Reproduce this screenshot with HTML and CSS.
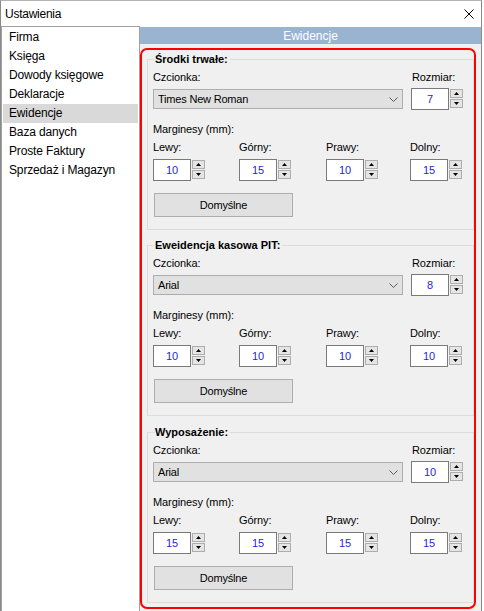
FILE: index.html
```html
<!DOCTYPE html>
<html lang="pl">
<head>
<meta charset="utf-8">
<title>Ustawienia</title>
<link rel="stylesheet" href="styles.css">
</head>
<body>
<div class="window">
  <div class="titlebar">
    <span class="title">Ustawienia</span>
    <svg class="close" width="10" height="10" viewBox="0 0 10 10"><path d="M0.5 0.5 L9.5 9.5 M9.5 0.5 L0.5 9.5" stroke="#000" stroke-width="1" fill="none"/></svg>
  </div>
  <div class="main">
    <ul class="nav">
      <li>Firma</li>
      <li>Księga</li>
      <li>Dowody księgowe</li>
      <li>Deklaracje</li>
      <li class="active">Ewidencje</li>
      <li>Baza danych</li>
      <li>Proste Faktury</li>
      <li>Sprzedaż i Magazyn</li>
    </ul>
    <div class="panel">
      <div class="panel-header">Ewidencje</div>
      <div class="highlight">

        <fieldset class="group">
          <legend>Środki trwałe:</legend>
          <div class="font-row">
            <div class="font-col">
              <div class="label">Czcionka:</div>
              <div class="ctrl"><div class="select"><span>Times New Roman</span><svg class="chev" width="9" height="5" viewBox="0 0 9 5"><path d="M0.5 0.5 L4.5 4.5 L8.5 0.5" stroke="#5a5a5a" stroke-width="1" fill="none"/></svg></div></div>
            </div>
            <div class="size-col">
              <div class="label">Rozmiar:</div>
              <div class="spin"><div class="spin-input">7</div><div class="spin-btns"><div class="spin-btn"><i class="up"></i></div><div class="spin-btn"><i class="down"></i></div></div></div>
            </div>
          </div>
          <div class="label margins-label">Marginesy (mm):</div>
          <div class="margins">
            <div class="m-cell"><div class="label">Lewy:</div><div class="spin"><div class="spin-input">10</div><div class="spin-btns"><div class="spin-btn"><i class="up"></i></div><div class="spin-btn"><i class="down"></i></div></div></div></div>
            <div class="m-cell"><div class="label">Górny:</div><div class="spin"><div class="spin-input">15</div><div class="spin-btns"><div class="spin-btn"><i class="up"></i></div><div class="spin-btn"><i class="down"></i></div></div></div></div>
            <div class="m-cell"><div class="label">Prawy:</div><div class="spin"><div class="spin-input">10</div><div class="spin-btns"><div class="spin-btn"><i class="up"></i></div><div class="spin-btn"><i class="down"></i></div></div></div></div>
            <div class="m-cell"><div class="label">Dolny:</div><div class="spin"><div class="spin-input">15</div><div class="spin-btns"><div class="spin-btn"><i class="up"></i></div><div class="spin-btn"><i class="down"></i></div></div></div></div>
          </div>
          <div class="btn">Domyślne</div>
        </fieldset>

        <fieldset class="group">
          <legend>Eweidencja kasowa PIT:</legend>
          <div class="font-row">
            <div class="font-col">
              <div class="label">Czcionka:</div>
              <div class="ctrl"><div class="select"><span>Arial</span><svg class="chev" width="9" height="5" viewBox="0 0 9 5"><path d="M0.5 0.5 L4.5 4.5 L8.5 0.5" stroke="#5a5a5a" stroke-width="1" fill="none"/></svg></div></div>
            </div>
            <div class="size-col">
              <div class="label">Rozmiar:</div>
              <div class="spin"><div class="spin-input">8</div><div class="spin-btns"><div class="spin-btn"><i class="up"></i></div><div class="spin-btn"><i class="down"></i></div></div></div>
            </div>
          </div>
          <div class="label margins-label">Marginesy (mm):</div>
          <div class="margins">
            <div class="m-cell"><div class="label">Lewy:</div><div class="spin"><div class="spin-input">10</div><div class="spin-btns"><div class="spin-btn"><i class="up"></i></div><div class="spin-btn"><i class="down"></i></div></div></div></div>
            <div class="m-cell"><div class="label">Górny:</div><div class="spin"><div class="spin-input">10</div><div class="spin-btns"><div class="spin-btn"><i class="up"></i></div><div class="spin-btn"><i class="down"></i></div></div></div></div>
            <div class="m-cell"><div class="label">Prawy:</div><div class="spin"><div class="spin-input">10</div><div class="spin-btns"><div class="spin-btn"><i class="up"></i></div><div class="spin-btn"><i class="down"></i></div></div></div></div>
            <div class="m-cell"><div class="label">Dolny:</div><div class="spin"><div class="spin-input">10</div><div class="spin-btns"><div class="spin-btn"><i class="up"></i></div><div class="spin-btn"><i class="down"></i></div></div></div></div>
          </div>
          <div class="btn">Domyślne</div>
        </fieldset>

        <fieldset class="group group-last">
          <legend>Wyposażenie:</legend>
          <div class="font-row">
            <div class="font-col">
              <div class="label">Czcionka:</div>
              <div class="ctrl"><div class="select"><span>Arial</span><svg class="chev" width="9" height="5" viewBox="0 0 9 5"><path d="M0.5 0.5 L4.5 4.5 L8.5 0.5" stroke="#5a5a5a" stroke-width="1" fill="none"/></svg></div></div>
            </div>
            <div class="size-col">
              <div class="label">Rozmiar:</div>
              <div class="spin"><div class="spin-input">10</div><div class="spin-btns"><div class="spin-btn"><i class="up"></i></div><div class="spin-btn"><i class="down"></i></div></div></div>
            </div>
          </div>
          <div class="label margins-label">Marginesy (mm):</div>
          <div class="margins">
            <div class="m-cell"><div class="label">Lewy:</div><div class="spin"><div class="spin-input">15</div><div class="spin-btns"><div class="spin-btn"><i class="up"></i></div><div class="spin-btn"><i class="down"></i></div></div></div></div>
            <div class="m-cell"><div class="label">Górny:</div><div class="spin"><div class="spin-input">15</div><div class="spin-btns"><div class="spin-btn"><i class="up"></i></div><div class="spin-btn"><i class="down"></i></div></div></div></div>
            <div class="m-cell"><div class="label">Prawy:</div><div class="spin"><div class="spin-input">15</div><div class="spin-btns"><div class="spin-btn"><i class="up"></i></div><div class="spin-btn"><i class="down"></i></div></div></div></div>
            <div class="m-cell"><div class="label">Dolny:</div><div class="spin"><div class="spin-input">15</div><div class="spin-btns"><div class="spin-btn"><i class="up"></i></div><div class="spin-btn"><i class="down"></i></div></div></div></div>
          </div>
          <div class="btn">Domyślne</div>
        </fieldset>

      </div>
    </div>
  </div>
</div>
</body>
</html>
```
FILE: styles.css
```css
* { box-sizing: border-box; }
html, body {
  margin: 0;
  padding: 0;
  background: #fff;
  overflow: hidden;
}
body {
  font-family: "Liberation Sans", Arial, sans-serif;
  font-size: 11px;
  color: #000;
}
.window {
  width: 482px;
  height: 640px;
  border: 1px solid #8a8a8a;
  border-top-color: #b4b4b4;
  background: #fff;
  display: flex;
  flex-direction: column;
}
.titlebar {
  height: 25px;
  flex: none;
  display: flex;
  align-items: center;
  justify-content: space-between;
  padding: 0 7px 0 4px;
  font-size: 12px;
  letter-spacing: -0.25px;
}
.close { display: block; }
.main {
  flex: 1;
  display: flex;
}
.nav {
  width: 139px;
  flex: none;
  margin: 0;
  padding: 1px;
  list-style: none;
  border: 1px solid #a0a0a0;
  background: #fff;
  font-size: 12px;
  letter-spacing: -0.15px;
}
.nav li {
  height: 19px;
  line-height: 19px;
  padding-left: 6px;
  white-space: nowrap;
}
.nav li.active { background: #d9d9d9; }
.panel {
  flex: 1;
  background: #f0f0f0;
  border-top: 1px solid #fff;
}
.panel-header {
  height: 17px;
  padding-top: 1px;
  line-height: 16px;
  background: #99b4d1;
  color: #fff;
  text-align: center;
  font-size: 12px;
}
.highlight {
  width: 336px;
  height: 561px;
  margin-top: 4px;
  border: 2px solid #ff0000;
  border-radius: 7px;
  padding: 2px 0 0 5px;
}
.group {
  width: 327px;
  margin: 0;
  padding: 0 0 12px 5px;
  border: 1px solid #dcdcdc;
  min-width: 0;
}
.group + .group { margin-top: 8px; }
.group-last { margin-top: 9px !important; }
.group legend {
  font-weight: bold;
  line-height: 14px;
  padding: 0 2px 0 1px;
  margin-left: 1px;
}
.label {
  line-height: 14px;
  white-space: nowrap;
  letter-spacing: -0.1px;
}
.font-row {
  display: flex;
  gap: 8px;
  padding-top: 4px;
}
.font-col { width: 250px; }
.font-col .label, .size-col .label { margin-bottom: 4px; }
.ctrl {
  height: 22px;
  display: flex;
  align-items: center;
}
.select {
  width: 250px;
  height: 20px;
  border: 1px solid #adadad;
  background: #e1e1e1;
  display: flex;
  align-items: center;
  justify-content: space-between;
  padding: 0 4px 0 4px;
  letter-spacing: -0.2px;
}
.chev { display: block; }
.size-col .label { padding-left: 1px; }
.spin { display: flex; }
.spin-input {
  width: 38px;
  height: 22px;
  border: 1px solid #7a7a7a;
  background: #fff;
  text-align: center;
  line-height: 20px;
  color: #1f1fd6;
}
.spin-btns {
  margin: 1px 0 0 1px;
  display: flex;
  flex-direction: column;
  gap: 1px;
}
.spin-btn {
  width: 13px;
  height: 9px;
  border: 1px solid #adadad;
  background: #e5e5e5;
  display: flex;
  align-items: center;
  justify-content: center;
}
.spin-btn i {
  display: block;
  width: 5px;
  height: 3px;
  background: #000;
}
.spin-btn i.up { clip-path: polygon(50% 0, 100% 100%, 0 100%); }
.spin-btn i.down { clip-path: polygon(0 0, 100% 0, 50% 100%); }
.margins-label { margin-top: 12px; }
.margins {
  display: grid;
  grid-template-columns: 86px 87px 84px auto;
  margin-top: 4px;
}
.m-cell .label { margin-bottom: 5px; }
.btn {
  width: 139px;
  height: 24px;
  margin-top: 12px;
  margin-left: 1px;
  border: 1px solid #adadad;
  background: #e1e1e1;
  text-align: center;
  line-height: 22px;
  letter-spacing: -0.2px;
}
```
